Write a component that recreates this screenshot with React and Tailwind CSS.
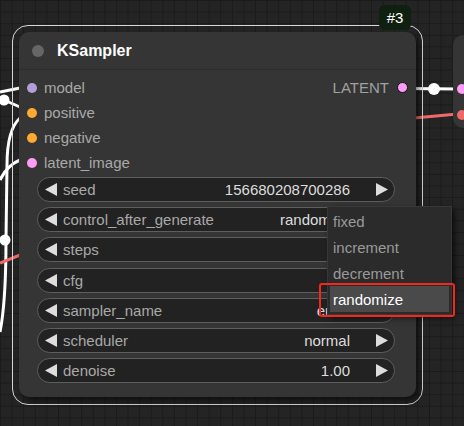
import React from "react";

const inputs = [
  { name: "model", color: "#b39ddb" },
  { name: "positive", color: "#ffa931" },
  { name: "negative", color: "#ffa931" },
  { name: "latent_image", color: "#ff9cf9" },
];

const widgets = [
  ["seed", "156680208700286"],
  ["control_after_generate", "randomize"],
  ["steps", "20"],
  ["cfg", "8.0"],
  ["sampler_name", "euler"],
  ["scheduler", "normal"],
  ["denoise", "1.00"],
];

const menuItems = ["fixed", "increment", "decrement", "randomize"];

function LeftArrow() {
  return (
    <svg width="12" height="13" viewBox="0 0 12 13" className="shrink-0">
      <polygon points="12,0 12,13 0,6.5" fill="#dddddd" />
    </svg>
  );
}

function RightArrow() {
  return (
    <svg width="12" height="13" viewBox="0 0 12 13" className="shrink-0">
      <polygon points="0,0 0,13 12,6.5" fill="#dddddd" />
    </svg>
  );
}

function Wires() {
  return (
    <svg
      width="464"
      height="426"
      viewBox="0 0 464 426"
      className="absolute left-0 top-0"
      fill="none"
    >
      <path d="M0,92 L20,88" stroke="#ffffff" strokeWidth="3" />
      <path d="M4,100 L20,107" stroke="#ffffff" strokeWidth="3" />
      <circle cx="4" cy="100" r="5.5" fill="#ffffff" />
      <path
        d="M20,118 C11,126 7,142 7,165 L6,240 C6,285 4,312 0,332"
        stroke="#ffffff"
        strokeWidth="3"
      />
      <path d="M20,160 C10,164 4,172 0,180" stroke="#ffffff" strokeWidth="3" />
      <circle cx="5" cy="240" r="5.5" fill="#ffffff" />
      <path d="M0,263 L20,255" stroke="#f06a6a" strokeWidth="3" />
      <path d="M406,88.5 L458,89" stroke="#ffffff" strokeWidth="3" />
      <circle cx="434" cy="89" r="6" fill="#ffffff" />
      <path d="M414,118 L458,114" stroke="#f06a6a" strokeWidth="3" />
    </svg>
  );
}

export default function App() {
  return (
    <div className="relative w-[464px] h-[426px] overflow-hidden bg-[#242424] [background-image:linear-gradient(to_right,#1b1b1b_1px,transparent_1px),linear-gradient(to_bottom,#1b1b1b_1px,transparent_1px)] [background-size:11.6px_11.6px] font-['Liberation_Sans',Arial,sans-serif]">
      <Wires />

      {/* selection outline */}
      <div className="absolute left-[12px] top-[25px] w-[411px] h-[380px] rounded-[16px] border-[1.5px] border-[#d6d6d6]" />

      {/* KSampler node */}
      <div className="absolute left-[19px] top-[32px] w-[397px] h-[365px] rounded-[10px] bg-[#353535] shadow-[3px_4px_6px_rgba(0,0,0,0.55)] flex flex-col">
        <div className="h-[38px] flex items-center pl-[13px] gap-[13px] border-b border-[#2d2d2d] shrink-0">
          <div className="w-[12px] h-[12px] rounded-full bg-[#666666]" />
          <span className="text-[16px] font-bold text-white leading-none">
            KSampler
          </span>
        </div>

        <div className="flex flex-col pt-[5px]">
          {inputs.map((inp, i) => (
            <div key={inp.name} className="h-[25px] flex items-center">
              <div
                className="ml-[8px] w-[10px] h-[10px] rounded-full shrink-0"
                style={{ backgroundColor: inp.color }}
              />
              <span className="ml-[7px] text-[15px] text-[#a9a9a9] leading-none">
                {inp.name}
              </span>
              {i === 0 && (
                <div className="ml-auto flex items-center">
                  <span className="text-[15px] text-[#a0a0a0] leading-none">
                    LATENT
                  </span>
                  <div className="ml-[8px] mr-[8px] w-[11px] h-[11px] rounded-full bg-[#ff9cf9] border border-[#111]" />
                </div>
              )}
            </div>
          ))}
        </div>

        <div className="flex flex-col gap-[5.2px] mt-[2px] ml-[18px] mr-[21px]">
          {widgets.map(([label, value]) => (
            <div
              key={label}
              className="h-[25px] rounded-full bg-[#222222] border border-[#5e5e5e] flex items-center pl-[7px] pr-[6px]"
            >
              <LeftArrow />
              <span className="ml-[6px] text-[15px] text-[#a9a9a9] leading-none whitespace-nowrap">
                {label}
              </span>
              <span className="flex-1 text-right text-[15px] text-[#dddddd] leading-none whitespace-nowrap">
                {value}
              </span>
              <div className="ml-[26px]">
                <RightArrow />
              </div>
            </div>
          ))}
        </div>
      </div>

      {/* right partial node */}
      <div className="absolute left-[453px] top-[35px] w-[40px] h-[93px] rounded-[10px] bg-[#353535]">
        <div className="absolute left-[4px] top-[49px] w-[10px] h-[10px] rounded-full bg-[#ff9cf9]" />
        <div className="absolute left-[4px] top-[75px] w-[10px] h-[10px] rounded-full bg-[#f06a6a]" />
      </div>

      {/* badge */}
      <div className="absolute left-[379px] top-[5px] w-[32px] h-[25px] rounded-[6px] bg-[#0f1f10] flex items-center justify-center text-white text-[15px] leading-none">
        #3
      </div>

      {/* dropdown menu */}
      <div className="absolute left-[327px] top-[206px] w-[125px] h-[109px] bg-[#2b2b2b] border border-[#383838] shadow-[3px_3px_6px_rgba(0,0,0,0.6)] px-[2px] pt-[2px] flex flex-col">
        {menuItems.map((m) => (
          <div
            key={m}
            className={
              m === "randomize"
                ? "h-[26px] flex items-center pl-[3px] text-[15px] leading-none text-white bg-[#4a4a4a]"
                : "h-[25.7px] flex items-center pl-[3px] text-[15px] leading-none text-[#9a9a9a]"
            }
          >
            {m}
          </div>
        ))}
      </div>

      {/* red annotation box */}
      <div className="absolute left-[319px] top-[283px] w-[136px] h-[34px] border-2 border-[#f5261b] rounded-[3px]" />
    </div>
  );
}
